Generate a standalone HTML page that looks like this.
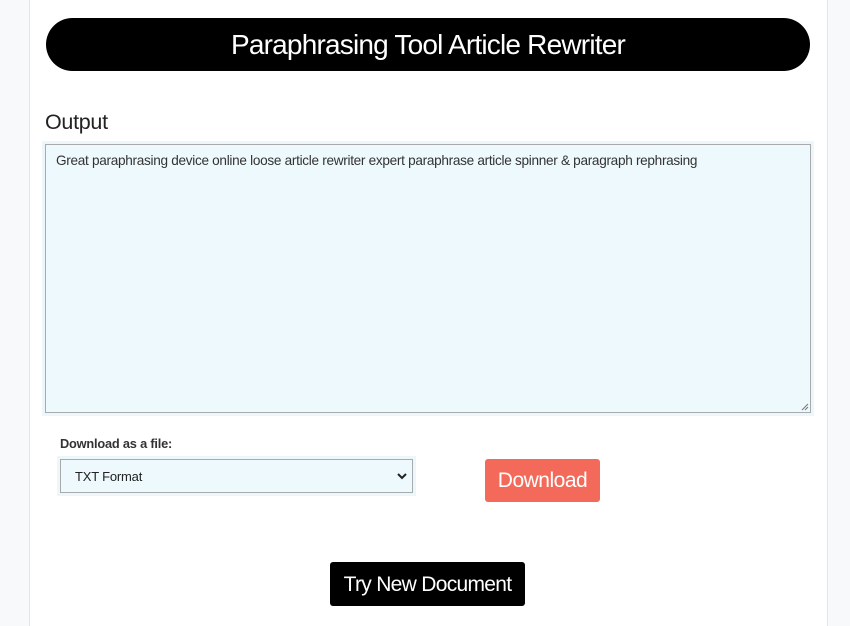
<!DOCTYPE html>
<html><head><style>
html,body{margin:0;width:850px;height:626px;overflow:hidden}
body{background:#f8f9fa;font-family:"Liberation Sans",sans-serif;position:relative}
.card{position:absolute;left:29px;top:-2px;width:797px;height:640px;background:#fff;border:1px solid #e3e5e8}
.abs{position:absolute}
.hdr{left:46px;top:18px;width:764px;height:53px;background:#000;border-radius:27px;color:#fff;font-size:28px;text-align:center;line-height:53px;font-weight:300;letter-spacing:-0.8px}
.out{left:45px;top:110px;font-size:21.5px;color:#222;letter-spacing:-0.3px}
.ta{left:45px;top:144px;width:764px;height:267px;background:#eef9fd;border:1px solid #a9aaab;box-shadow:0 0 0 3px #edf7fb}
.ta span{position:absolute;left:10px;top:8px;font-size:13.6px;color:#333;letter-spacing:-0.3px;white-space:nowrap}
.lbl{left:60px;top:436px;font-size:12.8px;font-weight:bold;color:#333;letter-spacing:-0.2px}
.sel{left:60px;top:459px;width:351px;height:32px;background:#eef9fd;border:1px solid #a9aaab;box-shadow:0 0 0 3px #edf7fb;font-size:13px;color:#222}
.sel span{position:absolute;left:14px;top:9px;letter-spacing:-0.2px}
.dl{left:485px;top:459px;width:115px;height:43px;background:#f46a5a;border-radius:3px;color:#fff;font-size:21px;text-align:center;line-height:44px;font-weight:300;letter-spacing:-0.5px}
.tn{left:330px;top:562px;width:195px;height:44px;background:#000;border-radius:3px;color:#fff;font-size:21px;text-align:center;line-height:45px;letter-spacing:-0.7px}
</style></head><body>
<div class="card"></div>
<div class="abs hdr">Paraphrasing Tool Article Rewriter</div>
<div class="abs out">Output</div>
<div class="abs ta"><span>Great paraphrasing device online loose article rewriter expert paraphrase article spinner &amp; paragraph rephrasing</span>
<svg style="position:absolute;right:1px;bottom:1px" width="9" height="9"><path d="M2 8L8 2M5 8L8 5" stroke="#777" stroke-width="1"/></svg></div>
<div class="abs lbl">Download as a file:</div>
<div class="abs sel"><span>TXT Format</span>
<svg style="position:absolute;right:5px;top:12px" width="10" height="8"><path d="M1 2L5 6L9 2" stroke="#222" stroke-width="2" fill="none"/></svg></div>
<div class="abs dl">Download</div>
<div class="abs tn">Try New Document</div>
</body></html>
